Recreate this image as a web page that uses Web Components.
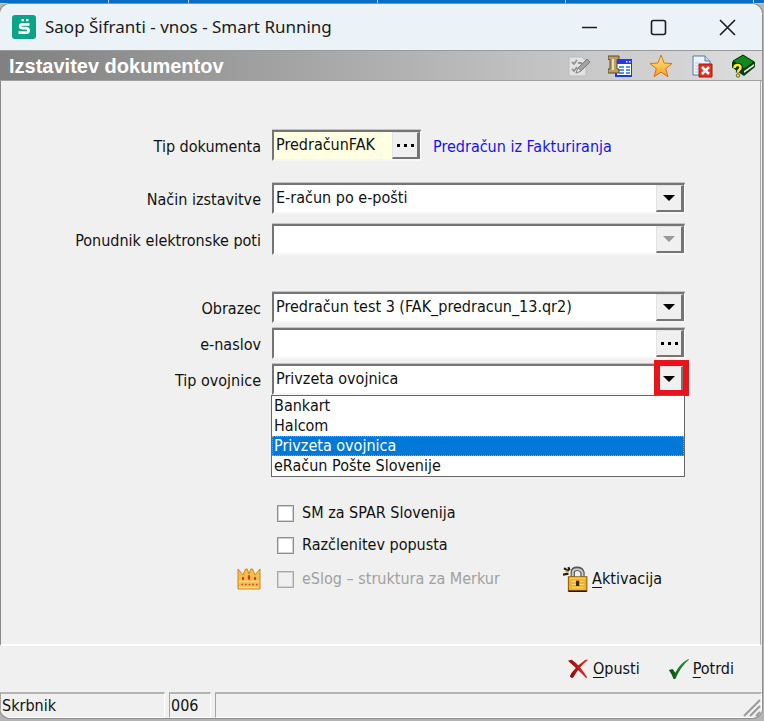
<!DOCTYPE html>
<html lang="sl">
<head>
<meta charset="utf-8">
<title>Saop Šifranti - vnos - Smart Running</title>
<style>
  html, body { margin: 0; }
  body {
    --face: #f0f0f0;
    --shadow: #757575;
    --accent: #0078d7;
    min-height: 100vh;
    display: flex;
    flex-direction: column;
    background: #b4b4b4;
    color: #111;
    font: 16px/20px "DejaVu Sans Condensed", "DejaVu Sans", sans-serif;
  }
</style>
</head>
<body>
<desktop-strip></desktop-strip>
<app-window>
  <title-bar slot="title">Saop Šifranti - vnos - Smart Running</title-bar>
  <page-header slot="header">Izstavitev dokumentov</page-header>
  <form-panel></form-panel>
  <action-bar slot="actions"></action-bar>
  <status-bar slot="status">
    <status-cell size="user">Skrbnik</status-cell>
    <status-cell size="code">006</status-cell>
    <status-cell size="rest"></status-cell>
  </status-bar>
</app-window>

<script>
const define = (name, html) => customElements.define(name, class extends HTMLElement {
  constructor() {
    super();
    this.attachShadow({ mode: 'open' });
  }
  connectedCallback() {
    if (this.shadowRoot.childNodes.length) return;
    const t = document.createElement('template');
    t.innerHTML = typeof html === 'function' ? html(this) : html;
    this.shadowRoot.append(t.content.cloneNode(true));
  }
});

const icons = {
  logo: `<rect width="24" height="24" rx="3" fill="#0aa486"/><path d="M17.500 9.300H10.500q-2.300 0-2.300 1.900t2.300 1.900h3.500q2.500 0 2.500 2.300t-2.500 2.300H6.500" fill="none" stroke="#fff" stroke-width="2.800"/><path d="M9.500 4h2.500v2.300H9.500zM14 4h2.500v2.300H14z" fill="#fff"/>`,
  edit: `<path d="M2 3h13l4 4v15H2z" fill="#e2e2e2" stroke="#bcbcbc"/><path d="M5 8l2 2 3-4M5 15l2 2 3-4M11 9h4" fill="none" stroke="#949494" stroke-width="1.800"/><path d="M9 19l2-5 9-9 3 3-9 9z" fill="#a2a2a2" stroke="#7c7c7c"/><path d="M9 19l2-5 3 3z" fill="#eee" stroke="#777" stroke-width=".7"/>`,
  form: `<path d="M8 6h16v16H8z" fill="#fff" stroke="#1c3cc9" stroke-width="2"/><path d="M9 5h15v5H9z" fill="#2439ee"/><path d="M18 7h1.500v1.500H18zM21 7h1.500v1.500H21z" fill="#fff"/><path d="M11 13h5M11 16h5M11 19h5M18 13h4M18 16h4M18 19h4" stroke="#5b93e6" stroke-width="2"/><path d="M0 2h11v3.500H9V15h2v4H0v-4h2V5.500H0z" fill="#b99f67" stroke="#5d4c28"/><path d="M5 5v11" stroke="#efdcae" stroke-width="2"/>`,
  star: `<defs><linearGradient id="s" x2="0" y2="1"><stop stop-color="#fff08a"/><stop offset="1" stop-color="#f99a1c"/></linearGradient></defs><path d="M12 1l3 8 8 .5-6.300 5.200 2.300 8.100-7-4.600-7 4.600 2.300-8.100L1 9.500 9 9z" fill="url(#s)" stroke="#d9701a"/>`,
  remove: `<path d="M3 2h12l5 5v14H3z" fill="#edf4ff" stroke="#5076b5"/><path d="M15 2v5h5" fill="#c6dafa" stroke="#5076b5"/><path d="M5 9h5M5 12h3M5 15h3M5 18h3" stroke="#b3c8e8"/><path d="M9 10h13v13H9z" fill="#e0301e" stroke="#a8180c"/><path d="M12 13l7 7M19 13l-7 7" stroke="#fff" stroke-width="2.500"/>`,
  help: `<path d="M1 8L12 1l12 7v5L13 22l-6-4-6-5z" fill="#083f0a"/><path d="M2 7l10-6 11 7-10 7z" fill="#118a1c" stroke="#042d06"/><path d="M13 17l10-7v2l-10 7z" fill="#eee"/><path d="M3.500 14q0-3 3-3t3 2.500q0 1.500-1.500 2.500-1 .7-1 2.500" fill="none" stroke="#222" stroke-width="4.500"/><path d="M3.500 14q0-3 3-3t3 2.500q0 1.500-1.500 2.500-1 .7-1 2.500" fill="none" stroke="#f7ee24" stroke-width="2.600"/><circle cx="7" cy="21.500" r="1.700" fill="#f7ee24" stroke="#222" stroke-width=".7"/>`,
  crown: `<path d="M1 2l5 6 2.500-6 1.700 0L12 7l1.800-5 1.700 0L18 8l5-6v20H1z" fill="#f7bd4c" stroke="#cc8520" stroke-linejoin="round"/><path d="M2 14.500h20M2 20.500h20" stroke="#ffdf85" stroke-width="1.500"/><path d="M4.500 17.500h16" stroke="#d2402c" stroke-width="1.600" stroke-dasharray="1.600 2"/><ellipse cx="6" cy="11.500" rx="1.200" ry="1.800" fill="#d5343a"/><ellipse cx="12" cy="10.500" rx="1.300" ry="2.400" fill="#d5343a"/><ellipse cx="18" cy="11.500" rx="1.200" ry="1.800" fill="#d5343a"/>`,
  lock: `<path d="M9 11V6q0-3.500 4-3.500t5 3.500v4" fill="none" stroke="#565656" stroke-width="4"/><path d="M9 10V6q0-3 4-3t5 3v4" fill="none" stroke="#c9c9c9" stroke-width="1.800"/><path d="M1 2l4 3M0 8l5-1M5 1l1 3" stroke="#1c1c1c" stroke-width="2"/><path d="M2 4l3 2" stroke="#f0a31f" stroke-width="1.500"/><path d="M5 10h17v13H5z" fill="#f5b229" stroke="#8f5d0a"/><path d="M6 11h15M8 14h4M15 14h4M8 17h4M15 17h4M8 20h11" stroke="#ffe07c"/><path d="M5 23.300h17" stroke="#201708" stroke-width="1.400"/><path d="M12 13.500h3v5h-3z" fill="#3d2b0a"/>`,
  cancel: `<defs><linearGradient id="r"><stop stop-color="#8a0a0a"/><stop offset="1" stop-color="#ee2c2c"/></linearGradient></defs><path d="M0 3l4-1q8 5 17 19l-1 1Q11 13 0 3z" fill="url(#r)"/><path d="M2 20l2-4Q10 8 19 2l3 0Q12 10 6 21q-2 2-4-1z" fill="url(#r)"/>`,
  confirm: `<defs><linearGradient id="g"><stop stop-color="#064c0a"/><stop offset="1" stop-color="#2aa834"/></linearGradient></defs><path d="M1 13l4-1 3 4Q13 6 22 1l1 1Q14 9 8 23l-2 0Q4 17 1 13z" fill="url(#g)"/>`
};
const svg = (name, cls = '') => `<svg class="${cls}" viewBox="0 0 24 24" aria-hidden="true">${icons[name]}</svg>`;
const reset = `
  *, *::before, *::after { box-sizing: border-box; }
  svg { display: block; }
  button, input, select { font: inherit; color: inherit; margin: 0; padding: 0; border: 0; background: none; border-radius: 0; }
`;

define('desktop-strip', `<style>
  :host { display: flex; height: 3px; background: #0a6cc4; border-bottom: 1px solid #c8d3dc; }
  i { flex: 19; border-right: 1px solid #b9d2ea; }
  i:nth-of-type(1) { flex: 11; }
  i:nth-of-type(2) { flex: 8; }
  i:nth-of-type(6) { flex: 1; border: 0; }
</style><i></i><i></i><i></i><i></i><i></i><i></i>`);

define('app-window', `<style>
  :host { flex: 1; display: flex; flex-direction: column; margin: 0 2px 3px 0; background: var(--face);
    border-radius: 10px; overflow: hidden; box-shadow: 0 0 0 1px #8f8f8f; }
  main { flex: 1; display: flex; flex-direction: column; margin-right: 1px; border-left: 1px solid #888; border-right: 1px solid #aaa; border-bottom: 2px solid #fff; }
</style>
<slot name="title"></slot><slot name="header"></slot><main><slot></slot></main>
<slot name="actions"></slot><slot name="status"></slot>`);

define('title-bar', `<style>${reset}
  :host { display: flex; align-items: center; height: 46px; background: #ebf3f9; color: #1a1a1a;
    font-family: "Noto Sans", sans-serif; font-size: 17px; line-height: 24px; }
  .logo { width: 24px; height: 24px; margin: 0 9px 0 12px; }
  span { flex: 1; white-space: nowrap; }
  button { width: 69px; height: 45px; display: grid; place-items: center; }
  button svg { width: 17px; height: 17px; fill: none; stroke: #1c1c1c; stroke-width: 1.600; }
</style>
${svg('logo', 'logo')}<span><slot></slot></span>
<button aria-label="Minimiraj"><svg viewBox="0 0 17 17"><path d="M1 8.500h15"/></svg></button>
<button aria-label="Maksimiraj"><svg viewBox="0 0 17 17"><rect x="1.500" y="1.500" width="14" height="14" rx="2"/></svg></button>
<button aria-label="Zapri"><svg viewBox="0 0 17 17"><path d="M1 1l15 15M16 1L1 16"/></svg></button>`);

define('page-header', `<style>${reset}
  :host { display: flex; align-items: center; height: 29px; padding: 0 7px 0 9px;
    background: linear-gradient(90deg, #808080, #dedede); border-top: 1px solid #9a9a9a; border-bottom: 1px solid #a0a0a0; }
  h1 { flex: 1; margin: 0; color: #fff; font: bold 20px/28px "Liberation Sans", Arial, sans-serif; }
  nav { display: flex; gap: 17px; }
  nav button, nav svg { width: 24px; height: 24px; }
</style>
<h1><slot></slot></h1>
<nav>
  <button aria-label="Uredi">${svg('edit')}</button>
  <button aria-label="Obrazec">${svg('form')}</button>
  <button aria-label="Priljubljeno">${svg('star')}</button>
  <button aria-label="Odstrani">${svg('remove')}</button>
  <button aria-label="Pomoč">${svg('help')}</button>
</nav>`);

/* Label with a sunken box: kind is "lookup" (text box with a dots button) or "combo" (drop-down). */
define('field-row', el => {
  const value = el.getAttribute('value') || '';
  const off = el.hasAttribute('disabled') ? 'disabled' : '';
  const options = (el.getAttribute('options') || value).split('|');
  const combo = el.getAttribute('kind') === 'combo';
  const control = combo
    ? `<select id="c" ${off}>${options.map(o => `<option${o === value ? ' selected' : ''}>${o}</option>`).join('')}</select>
       <span class="key arrow"><svg viewBox="0 0 12 6"><path d="M0 0h12L6 6z"/></svg></span>`
    : `<input id="c" type="text" value="${value}"><button class="key" aria-label="Izberi"><svg viewBox="0 0 17 3"><path d="M0 0h3v3H0zM7 0h3v3H7zM14 0h3v3h-3z"/></svg></button>`;
  return `<style>${reset}
    :host { display: grid; grid-template-columns: 260px 1fr; column-gap: 11px; align-items: center; }
    label { text-align: right; padding-top: 2px; white-space: nowrap; }
    .line { display: flex; align-items: center; gap: 12px; position: relative; }
    .box { flex: 1; display: grid; grid-template-columns: 1fr 28px; height: 31px; background: #fff;
      border: solid; border-width: 2px 1px 2px 2px; border-color: var(--shadow) #fff #f6f6f6 var(--shadow); box-shadow: 0 -1px #c4c4c4; }
    :host([compact]) .box { flex: 0 0 149px; background: #ffffe1; }
    select, input { grid-area: 1 / 1 / 2 / 2; min-width: 0; width: 100%; appearance: none; padding: 0 0 2px 2px; outline: 0; opacity: 1; }
    .key { grid-area: 1 / 2; display: grid; place-items: center; background: var(--face);
      border: solid; border-width: 1px 3px 2px 1px; border-color: #e3e3e3 var(--shadow) var(--shadow) #e3e3e3; }
    .arrow { pointer-events: none; }
    .key svg { width: 17px; height: 3px; }
    .arrow svg { width: 12px; height: 6px; }
    :host([disabled]) .key svg { fill: #999; }
    .mark { position: absolute; right: -4px; top: -4px; width: 35px; height: 36px; border: 6px solid #e8141c; pointer-events: none; }
  </style>
  <label for="c">${el.getAttribute('label')}</label>
  <div class="line"><div class="box">${control}</div><slot></slot>${el.hasAttribute('marked') ? '<slot name="popup"></slot><span class="mark"></span>' : ''}</div>`;
});

define('option-list', el => `<style>${reset}
  :host { position: absolute; top: 100%; left: -1px; right: 0; z-index: 1; }
  ul { list-style: none; margin: 0; padding: 0; background: #fff; border: 1px solid #666; }
  li { padding-left: 2px; line-height: 20px; height: 20px; }
  li[aria-selected=true] { background: var(--accent); color: #fff; outline: 1px dotted #e08a3c; outline-offset: -1px; }
</style>
<ul role="listbox" aria-label="Tip ovojnice">${el.getAttribute('items').split('|').map(i =>
  `<li role="option" aria-selected="${i === el.getAttribute('value')}">${i}</li>`).join('')}</ul>`);

define('check-field', el => `<style>${reset}
  :host { display: flex; }
  label { display: flex; align-items: center; gap: 8px; white-space: nowrap; }
  input { appearance: none; width: 17px; height: 17px; background: #fff; border: 1px solid #8e8e8e; outline: 1px solid #d2d2d2; outline-offset: -2px; }
  :host([disabled]) { color: #a0a0a0; }
  :host([disabled]) input { background: var(--face); border-color: #a8a8a8; }
</style>
<label><input type="checkbox" ${el.hasAttribute('disabled') ? 'disabled' : ''}><span><slot></slot></span></label>`);

define('icon-button', el => `<style>${reset}
  :host { display: inline-flex; }
  button { display: flex; align-items: center; gap: 3px; white-space: nowrap; }
  svg { width: 22px; height: 22px; }
  :host([icon=lock]) svg { width: 26px; height: 26px; }
  ::slotted(u) { text-underline-offset: 3px; }
</style>
<button>${svg(el.getAttribute('icon'))}<span><slot></slot></span></button>`);

define('form-panel', `<style>${reset}
  :host { flex: 1; display: flex; flex-direction: column; padding: 49px 75px 40px 0; }
  section { display: flex; flex-direction: column; }
  .delivery { margin: 22px 0 37px; gap: 10px; }
  .layout { gap: 5px; }
  a { color: #1414f0; text-decoration: none; padding-top: 2px; }
  .checks { margin-top: 108px; padding-left: 276px; gap: 12px; }
  .premium { display: flex; align-items: center; gap: 15px; margin-top: 11px; padding-left: 235px; }
  .premium > svg { width: 26px; height: 24px; }
  icon-button { margin-left: auto; margin-right: 23px; }
</style>
<field-row kind="lookup" compact label="Tip dokumenta" value="PredračunFAK"><a href="#">Predračun iz Fakturiranja</a></field-row>
<section class="delivery">
  <field-row kind="combo" label="Način izstavitve" value="E-račun po e-pošti"></field-row>
  <field-row kind="combo" disabled label="Ponudnik elektronske poti"></field-row>
</section>
<section class="layout">
  <field-row kind="combo" label="Obrazec" value="Predračun test 3 (FAK_predracun_13.qr2)"></field-row>
  <field-row kind="lookup" label="e-naslov"></field-row>
  <field-row kind="combo" marked label="Tip ovojnice" value="Privzeta ovojnica" options="Bankart|Halcom|Privzeta ovojnica|eRačun Pošte Slovenije">
    <option-list slot="popup" items="Bankart|Halcom|Privzeta ovojnica|eRačun Pošte Slovenije" value="Privzeta ovojnica"></option-list>
  </field-row>
</section>
<section class="checks">
  <check-field>SM za SPAR Slovenija</check-field>
  <check-field>Razčlenitev popusta</check-field>
</section>
<div class="premium">${svg('crown')}<check-field disabled>eSlog – struktura za Merkur</check-field>
  <icon-button icon="lock"><u>A</u>ktivacija</icon-button></div>`);

define('action-bar', `<style>
  :host { display: flex; justify-content: flex-end; align-items: center; gap: 28px; height: 46px; padding-right: 28px; }
</style>
<icon-button icon="cancel"><u>O</u>pusti</icon-button>
<icon-button icon="confirm"><u>P</u>otrdi</icon-button>`);

define('status-bar', `<style>
  :host { display: flex; gap: 4px; height: 26px; position: relative; }
  svg { position: absolute; right: 1px; bottom: 1px; width: 18px; height: 18px; }
</style><slot></slot><svg viewBox="0 0 18 18" aria-hidden="true"><path d="M1 17L17 1M7 17L17 7M13 17l4-4" stroke="#9a9a9a" stroke-width="2"/></svg>`);

define('status-cell', `<style>
  :host { box-sizing: border-box; border: solid; border-width: 2px 1px 1px 1px; border-color: #b4b4b4 #fff #fff #a4a4a4; white-space: nowrap; padding: 1px 0 0 1px; line-height: 21px; }
  :host([size=user]) { flex: 0 0 165px; }
  :host([size=code]) { flex: 0 0 42px; }
  :host([size=rest]) { flex: 1; }
</style><slot></slot>`);
</script>
</body>
</html>
